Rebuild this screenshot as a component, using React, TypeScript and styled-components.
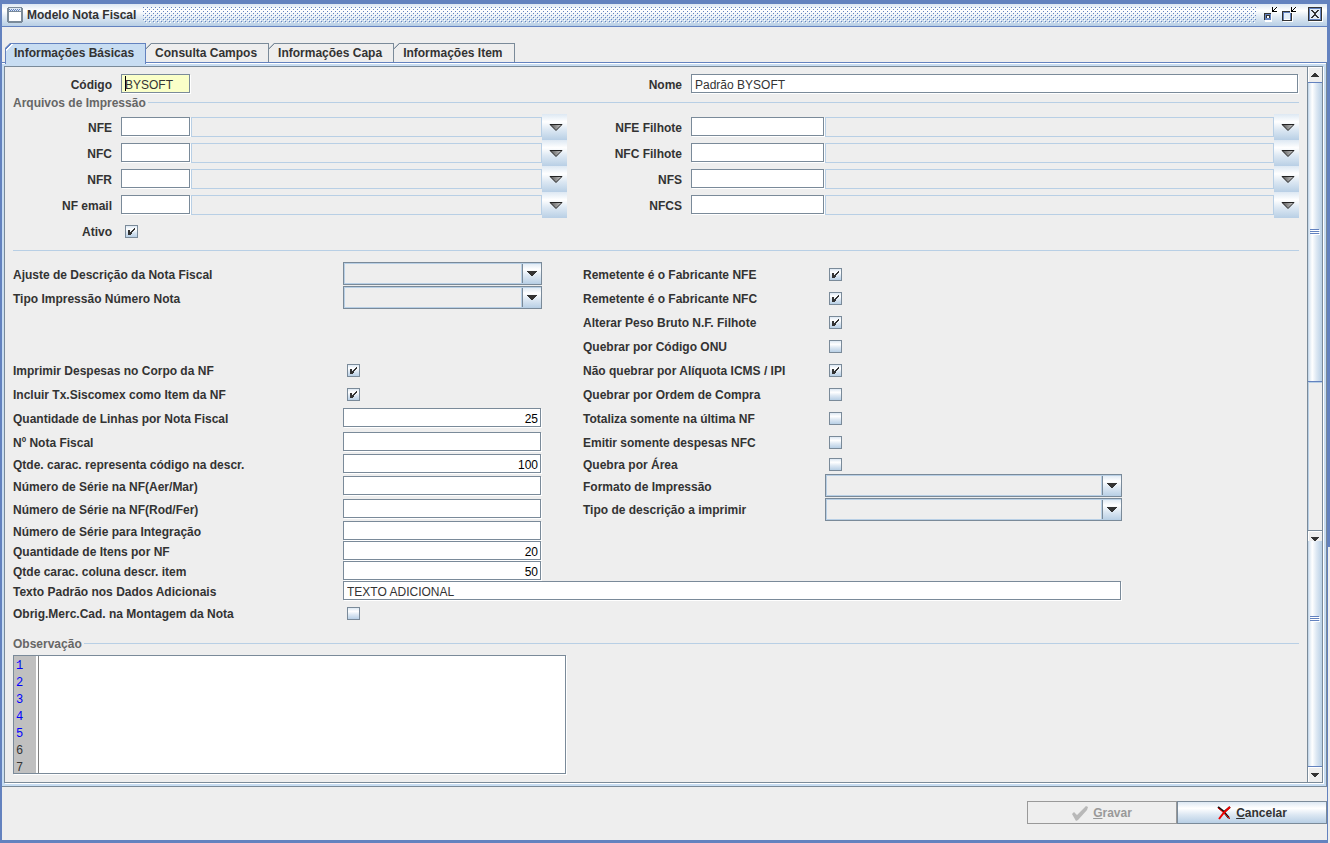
import React, { useState } from 'react';
import styled, { createGlobalStyle, css } from 'styled-components';

const c = {
  frame: '#6382bf',
  steel: '#7a8a99',
  sky: '#c8ddf2',
  pale: '#b8cfe5',
  ground: '#eeeeee',
  ink: '#333333',
};

const sheen = 'linear-gradient(180deg, #dde8f3 0%, #ffffff 30%, #dde8f3 60%, #b8cfe5 100%)';

const GlobalStyle = createGlobalStyle`
  * { box-sizing: border-box; }
  body { margin: 0; background: ${c.ground}; }
  body, button, input, select, textarea {
    font-family: "Liberation Sans", Arial, sans-serif;
    font-size: 12px;
    color: ${c.ink};
  }
`;

const Frame = styled.div`
  position: relative;
  min-height: 100vh;
  display: flex;
  flex-direction: column;
  background: ${c.ground};
  border: solid ${c.frame};
  border-width: 4px 3px 3px 2px;

  /* The lower part of the right edge is thinner than the upper part. */
  &::after {
    content: '';
    position: absolute;
    top: 65%;
    right: -3px;
    bottom: -3px;
    width: 2px;
    background: ${c.ground};
  }
`;

const TitleBar = styled.header`
  height: 23px;
  flex: none;
  display: flex;
  align-items: center;
  padding: 0 4px 0 5px;
  border-bottom: 1px solid ${c.frame};
  background: ${sheen};
`;

const Title = styled.h1`
  margin: 0 7px 0 4px;
  font-size: 12px;
  line-height: 16px;
  font-weight: bold;
`;

const DragTexture = styled.div`
  flex: 1;
  height: 16px;
  background: url("data:image/svg+xml,%3Csvg xmlns='http://www.w3.org/2000/svg' width='4' height='4' shape-rendering='crispEdges'%3E%3Cpath fill='%236382bf' d='M0 0h1v1h-1zM2 2h1v1h-1z'/%3E%3Cpath fill='%23fff' d='M1 1h1v1h-1zM3 3h1v1h-1z'/%3E%3C/svg%3E") 0 0 / 4px 4px;
`;

const TitleActions = styled.div`
  display: flex;
  align-items: center;
  gap: 2px;
  margin-left: 7px;
`;

const IconButton = styled.button<{ $spaced?: boolean }>`
  display: flex;
  width: 16px;
  height: 16px;
  padding: 0;
  border: 0;
  background: none;
  margin-left: ${(p) => (p.$spaced ? '8px' : '0')};
`;

const TabList = styled.div`
  display: flex;
  flex: none;
  align-items: flex-start;
  padding: 16px 0 0 3px;
  height: 35px;
`;

const Tab = styled.button<{ $active?: boolean }>`
  height: 19px;
  padding: 0 11px 0 9px;
  border: solid ${(p) => (p.$active ? c.frame : c.steel)};
  border-width: 1px 1px 0 0;
  clip-path: polygon(5px 0, calc(100% + 1px) 0, calc(100% + 1px) 100%, 0 100%, 0 5px);
  background: linear-gradient(135deg, ${c.steel} 4px, ${c.ground} 4px);
  font-weight: bold;
  line-height: 17px;
  white-space: nowrap;

  ${(p) =>
    p.$active &&
    css`
      position: relative;
      z-index: 1;
      height: 21px;
      padding: 0 11px 2px 8px;
      border-left-width: 1px;
      background: linear-gradient(135deg, ${c.frame} 4px, #fff 4px, #fff 5px, ${c.sky} 5px);
    `}
`;

const TabPanel = styled.section`
  flex: 1;
  display: flex;
  border: solid ${c.steel};
  border-width: 1px 1px 1px 0;
  border-top-color: ${c.frame};
  background: ${c.sky};
  padding: 3px 3px 3px 2px;
  box-shadow: inset 0 1px 0 #fff;
`;

const ScrollArea = styled.div`
  flex: 1;
  min-width: 0;
  display: flex;
  border: 1px solid ${c.steel};
  background: ${c.ground};
  box-shadow: 1px 1px 0 #fff;
`;

const Form = styled.form`
  flex: 1;
  min-width: 0;
  padding: 6px 8px 8px;
`;

const Halves = styled.div`
  display: grid;
  grid-template-columns: 554fr 732fr;
`;

const LookupRow = styled.div<{ $side: 'left' | 'right' }>`
  display: grid;
  grid-template-columns: ${(p) =>
    p.$side === 'left' ? '108px 70px 1fr 25px' : '124px 134px 1fr 25px'};
  align-items: center;
  height: 26px;
`;

const HeadRow = styled(LookupRow)`
  height: 22px;
`;

const Label = styled.label`
  padding-top: 2px;
  font-weight: bold;
  line-height: 14px;
  white-space: nowrap;
`;

const RightLabel = styled(Label)`
  padding-right: 9px;
  text-align: right;
`;

const SideLabel = styled(Label)`
  padding-left: 41px;
`;

const field = css`
  height: 19px;
  padding: 2px 3px 0;
  border: 1px solid ${c.steel};
  border-radius: 0;
  outline: none;
  background: #fff;
  box-shadow: 1px 1px 0 #fff;
`;

const TextField = styled.input<{ $highlight?: boolean; $numeric?: boolean }>`
  ${field}
  width: calc(100% - 1px);
  min-width: 0;
  margin: 0 1px 1px 0;
  ${(p) =>
    p.$highlight &&
    `background: linear-gradient(#000, #000) 3px 1px / 1px 15px no-repeat, #faffc8;`}
  ${(p) => p.$numeric && 'text-align: right; color: #000; padding-right: 2px;'}
`;

const NameField = styled(TextField)`
  grid-column: 2 / 5;
`;

const Description = styled.input`
  width: 100%;
  min-width: 0;
  height: 20px;
  padding: 0 3px;
  border: 1px solid ${c.pale};
  border-radius: 0;
  background: ${c.ground};
`;

const LookupButton = styled.button`
  height: 26px;
  display: flex;
  align-items: center;
  justify-content: center;
  padding: 2px 0 0 2px;
  border: 0;
  background: ${sheen};
`;

const Legend = styled.div`
  display: flex;
  align-items: center;
  height: 14px;
  gap: 2px;
  font-weight: bold;
  color: #666;
  white-space: nowrap;

  &::after {
    content: '';
    flex: 1;
    height: 1px;
    background: ${c.pale};
  }
`;

const NotesLegend = styled(Legend)`
  margin-top: 11px;
`;

const LegendText = styled.span`
  padding-top: 2px;
  line-height: 14px;
`;

const LookupRows = styled.div`
  padding-top: 5px;
`;

const Divider = styled.hr`
  height: 1px;
  margin: 6px 0 11px;
  border: 0;
  background: ${c.pale};
`;

const Tick = styled.input.attrs({ type: 'checkbox' })`
  appearance: none;
  width: 13px;
  height: 13px;
  margin: 0 0 0 4px;
  border: 1px solid ${c.steel};
  background: ${sheen};

  &:checked {
    background:
      url("data:image/svg+xml,%3Csvg xmlns='http://www.w3.org/2000/svg' width='11' height='11' shape-rendering='crispEdges'%3E%3Cpath fill='%23333' d='M2 4h2v5h-2zM4 6h1v3h-1zM5 5h1v3h-1zM6 4h1v2h-1zM7 3h1v2h-1zM8 2h1v2h-1z'/%3E%3C/svg%3E") 0 0 / 11px 11px no-repeat,
      ${sheen};
  }
`;

const Options = styled.div`
  display: grid;
  grid-template-columns: 330px 199px 283px 297px;
  grid-template-rows: repeat(8, 24px) 20px 24px 22px 21px 20px 20px 20px 24px;
`;

const Cell = styled.div<{ $row: number; $col: string; $top?: boolean }>`
  grid-row: ${(p) => p.$row};
  grid-column: ${(p) => p.$col};
  display: flex;
  align-items: ${(p) => (p.$top ? 'flex-start' : 'center')};
`;

const Combo = styled.select`
  appearance: none;
  width: 100%;
  height: 23px;
  padding: 0 22px 0 4px;
  border: 1px solid ${c.steel};
  border-radius: 0;
  outline: none;
  background:
    url("data:image/svg+xml,%3Csvg xmlns='http://www.w3.org/2000/svg' width='10' height='5' shape-rendering='crispEdges'%3E%3Cpath fill='%23333' d='M0 0h10v1h-1v1h-1v1h-1v1h-1v1h-2v-1h-1v-1h-1v-1h-1v-1h-1z'/%3E%3C/svg%3E") no-repeat right 4px center,
    linear-gradient(${c.steel}, ${c.steel}) no-repeat right 18px center / 1px 100%,
    ${sheen} no-repeat right center / 18px 100%,
    linear-gradient(${c.pale}, ${c.pale}) no-repeat right 19px center / 1px 100%,
    ${c.ground};
  box-shadow: inset 1px 1px 0 ${c.pale}, inset 0 -1px 0 ${c.pale};
`;

const Notes = styled.div`
  display: flex;
  width: 553px;
  max-width: 100%;
  height: 119px;
  margin-top: 5px;
  border: 1px solid ${c.steel};
  background: #fff;
  box-shadow: 1px 1px 0 #fff;
  overflow: hidden;
`;

const Gutter = styled.ol`
  width: 22px;
  margin: 0 2px 0 0;
  padding: 2px 2px 0;
  list-style: none;
  background: #c0c0c0;
  font-family: "Liberation Mono", monospace;
  font-size: 12px;
  line-height: 17px;
`;

const LineNumber = styled.li<{ $blue: boolean }>`
  color: ${(p) => (p.$blue ? '#0000ff' : c.ink)};
`;

const NotesText = styled.textarea`
  flex: 1;
  padding: 1px 3px;
  border: 0;
  border-left: 1px solid #808080;
  outline: none;
  resize: none;
  line-height: 17px;
`;

const ScrollBar = styled.div`
  width: 15px;
  display: flex;
  flex-direction: column;
  border-left: 1px solid ${c.steel};
`;

const ScrollButton = styled.button<{ $part?: boolean }>`
  flex: none;
  display: flex;
  justify-content: center;
  align-items: ${(p) => (p.$part ? 'flex-end' : 'center')};
  height: ${(p) => (p.$part ? '11px' : '15px')};
  padding: 0;
  border: 0;
  border-top: ${(p) => (p.$part ? `1px solid ${c.steel}` : '0')};
  background: ${c.ground};
  box-shadow: inset 1px 1px 0 #fff;
`;

const Thumb = styled.div<{ $grow: number; $continued?: boolean }>`
  flex: ${(p) => p.$grow} 1 0;
  display: flex;
  align-items: ${(p) => (p.$continued ? 'flex-start' : 'center')};
  justify-content: center;
  border: solid ${c.frame};
  border-width: ${(p) => (p.$continued ? '0 0 1px' : '1px 0')};
  background: linear-gradient(90deg, #b8cfe5 0, #dde8f3 10%, #fff 30%, #dde8f3 60%, #b8cfe5 100%);

  & > svg { margin-top: ${(p) => (p.$continued ? '75px' : '0')}; }
`;

const Track = styled.div`
  flex: 148 1 0;
  border-left: 1px solid ${c.pale};
  box-shadow: inset 0 1px 0 ${c.pale};
`;

const Footer = styled.footer`
  flex: none;
  display: flex;
  justify-content: flex-end;
  padding: 14px 0 16px;
`;

const ActionButton = styled.button`
  display: flex;
  align-items: center;
  justify-content: center;
  gap: 4px;
  width: 150px;
  height: 23px;
  padding: 0;
  border: 1px solid ${c.steel};
  background: ${sheen};
  font-weight: bold;

  &:disabled {
    border-color: #999;
    background: ${c.ground};
    color: #999;
  }
`;

const WindowIcon = () => (
  <svg width="16" height="16" shapeRendering="crispEdges" aria-hidden="true">
    <path fill={c.steel} d="M1 0h14v1h1v14h-1v1h-14v-1h-1v-14h1z" />
    <path fill="#dde8f3" d="M2 1h12v3h-12z" />
    <path fill={c.frame} d="M2 2h1v1h-1zM4 2h1v1h-1zM6 2h1v1h-1zM8 2h1v1h-1zM10 2h1v1h-1zM12 2h1v1h-1zM3 3h1v1h-1zM5 3h1v1h-1zM7 3h1v1h-1zM9 3h1v1h-1zM11 3h1v1h-1z" />
    <path fill="#fff" d="M2 5h12v9h-12z" />
  </svg>
);

const CornerArrow = () => (
  <>
    <path fill="#fff" d="M10 5h5v1h-5zM11 3h1v1h-1zM12 2h1v1h-1zM13 1h1v1h-1zM14 0h1v1h-1z" />
    <path fill="#000" d="M9 0h1v5h-1zM10 4h4v1h-4zM10 3h1v1h-1zM11 2h1v1h-1zM12 1h1v1h-1zM13 0h1v1h-1z" />
  </>
);

const MinimizeIcon = () => (
  <svg width="16" height="16" shapeRendering="crispEdges" overflow="visible" aria-hidden="true">
    <path fill="#fff" d="M2 7h7v8h-7z" />
    <path fill={c.ink} d="M1 6h7v7h-7z" />
    <path fill={c.frame} d="M2 7h6v6h-6z" />
    <path fill={c.ink} d="M3 8h4v3h-4z" />
    <path fill="#fff" d="M4 9h2v2h-2z" />
    <CornerArrow />
  </svg>
);

const MaximizeIcon = () => (
  <svg width="16" height="16" shapeRendering="crispEdges" overflow="visible" aria-hidden="true">
    <path fill="#fff" d="M2 6h10v9h-10z" />
    <path fill={c.ink} d="M1 4h8v1h-7v8h8v-7h1v8h-10z" />
    <path fill={c.frame} d="M2 5h7v1h-6v7h6v-7h1v7h-8z" />
    <path fill="#e4edf6" d="M3 6h6v6h-6z" />
    <g transform="translate(1)"><CornerArrow /></g>
  </svg>
);

const CloseIcon = () => (
  <svg width="16" height="16" shapeRendering="crispEdges" aria-hidden="true">
    <g transform="translate(1)">
      <path fill="#fff" d="M1 1h14v14h-14z" />
      <path fill={c.ink} d="M0 0h14v14h-14z" />
      <path fill={c.frame} d="M1 1h12v12h-12z" />
      <path fill="#e4edf6" d="M2 2h10v10h-10z" />
      <path
        fill={c.ink}
        d="M3 3h2v1h-2zM4 4h2v1h-2zM5 5h2v1h-2zM6 6h2v2h-2zM7 5h2v1h-2zM8 4h2v1h-2zM9 3h2v1h-2zM5 8h2v1h-2zM4 9h2v1h-2zM3 10h2v1h-2zM7 8h2v1h-2zM8 9h2v1h-2zM9 10h2v1h-2z"
      />
    </g>
  </svg>
);

const LookupArrow = () => (
  <svg width="14" height="8" aria-hidden="true">
    <defs>
      <linearGradient id="arrow" x1="0" x2="1">
        <stop offset="0" stopColor="#555" />
        <stop offset="1" stopColor="#ccc" />
      </linearGradient>
    </defs>
    <path d="M1 .5h12l-6 6z" fill="url(#arrow)" stroke="#222" strokeWidth="1" />
  </svg>
);

const Arrow = ({ up }: { up?: boolean }) => (
  <svg width="8" height="4" shapeRendering="crispEdges" aria-hidden="true">
    <path fill={c.ink} d={up ? 'M3 0h2v1h1v1h1v1h1v1h-8v-1h1v-1h1v-1h1z' : 'M0 0h8v1h-1v1h-1v1h-1v1h-2v-1h-1v-1h-1v-1h-1z'} />
  </svg>
);

const Grip = () => (
  <svg width="10" height="6" shapeRendering="crispEdges" aria-hidden="true">
    <path fill="#fff" d="M1 1h9v1h-9zM1 3h9v1h-9zM1 5h9v1h-9z" />
    <path fill={c.frame} d="M0 0h9v1h-9zM0 2h9v1h-9zM0 4h9v1h-9z" />
  </svg>
);

const CheckMark = () => (
  <svg width="17" height="16" aria-hidden="true">
    <path d="M0 9l2-2 3 3 9-9 2 1-1 3-9 10-2 1z" fill="#b8b8b8" />
  </svg>
);

const Cross = () => (
  <svg width="15" height="14" aria-hidden="true">
    <path d="M1 1l5 4 6 7" stroke="#111" strokeWidth="2" fill="none" />
    <path d="M13 1l-6 5" stroke="#111" strokeWidth="2" fill="none" />
    <path d="M13 1l-6 5.500-5 6.500" stroke="#e00" strokeWidth="2" fill="none" />
    <path d="M1 2l5 4 7 7" stroke="#e00" strokeWidth="1" fill="none" />
  </svg>
);

const tabs = ['Informações Básicas', 'Consulta Campos', 'Informações Capa', 'Informações Item'];

const lookups: [string, string][] = [
  ['NFE', 'NFE Filhote'],
  ['NFC', 'NFC Filhote'],
  ['NFR', 'NFS'],
  ['NF email', 'NFCS'],
];

type Kind = 'combo' | 'check' | 'text' | 'number' | 'wide';
type Option = { row: number; label: string; kind: Kind; value?: string; on?: boolean };

const leftOptions: Option[] = [
  { row: 1, label: 'Ajuste de Descrição da Nota Fiscal', kind: 'combo' },
  { row: 2, label: 'Tipo Impressão Número Nota', kind: 'combo' },
  { row: 5, label: 'Imprimir Despesas no Corpo da NF', kind: 'check', on: true },
  { row: 6, label: 'Incluir Tx.Siscomex como Item da NF', kind: 'check', on: true },
  { row: 7, label: 'Quantidade de Linhas por Nota Fiscal', kind: 'number', value: '25' },
  { row: 8, label: 'Nº Nota Fiscal', kind: 'text' },
  { row: 9, label: 'Qtde. carac. representa código na descr.', kind: 'number', value: '100' },
  { row: 10, label: 'Número de Série na NF(Aer/Mar)', kind: 'text' },
  { row: 11, label: 'Número de Série na NF(Rod/Fer)', kind: 'text' },
  { row: 12, label: 'Número de Série para Integração', kind: 'text' },
  { row: 13, label: 'Quantidade de Itens por NF', kind: 'number', value: '20' },
  { row: 14, label: 'Qtde carac. coluna descr. item', kind: 'number', value: '50' },
  { row: 15, label: 'Texto Padrão nos Dados Adicionais', kind: 'wide', value: 'TEXTO ADICIONAL' },
  { row: 16, label: 'Obrig.Merc.Cad. na Montagem da Nota', kind: 'check' },
];

const rightOptions: Option[] = [
  { row: 1, label: 'Remetente é o Fabricante NFE', kind: 'check', on: true },
  { row: 2, label: 'Remetente é o Fabricante NFC', kind: 'check', on: true },
  { row: 3, label: 'Alterar Peso Bruto N.F. Filhote', kind: 'check', on: true },
  { row: 4, label: 'Quebrar por Código ONU', kind: 'check' },
  { row: 5, label: 'Não quebrar por Alíquota ICMS / IPI', kind: 'check', on: true },
  { row: 6, label: 'Quebrar por Ordem de Compra', kind: 'check' },
  { row: 7, label: 'Totaliza somente na última NF', kind: 'check' },
  { row: 8, label: 'Emitir somente despesas NFC', kind: 'check' },
  { row: 9, label: 'Quebra por Área', kind: 'check' },
  { row: 10, label: 'Formato de Impressão', kind: 'combo' },
  { row: 11, label: 'Tipo de descrição a imprimir', kind: 'combo' },
];

const OptionRow = ({ option, side }: { option: Option; side: 'left' | 'right' }) => {
  const id = `${side}-${option.row}`;
  const { kind, row } = option;
  const start = side === 'left' ? 1 : 3;
  const Caption = side === 'left' ? Label : SideLabel;
  return (
    <>
      <Cell $row={row} $col={`${start}`}>
        <Caption htmlFor={id}>{option.label}</Caption>
      </Cell>
      <Cell $row={row} $col={kind === 'wide' ? '2 / 5' : `${start + 1}`} $top={kind === 'combo'}>
        {kind === 'combo' && <Combo id={id}><option value="" /></Combo>}
        {kind === 'check' && <Tick id={id} defaultChecked={option.on} />}
        {(kind === 'text' || kind === 'number' || kind === 'wide') && (
          <TextField id={id} $numeric={kind === 'number'} defaultValue={option.value} />
        )}
      </Cell>
    </>
  );
};

const LookupField = ({ name, side }: { name: string; side: 'left' | 'right' }) => {
  const id = `lookup-${name.replace(' ', '-')}`;
  return (
    <LookupRow $side={side}>
      <RightLabel htmlFor={id}>{name}</RightLabel>
      <TextField id={id} />
      <Description readOnly aria-label={`Descrição ${name}`} />
      <LookupButton type="button" aria-label={`Pesquisar ${name}`}><LookupArrow /></LookupButton>
    </LookupRow>
  );
};

export default function App() {
  const [active, setActive] = useState(0);
  return (
    <Frame>
      <GlobalStyle />
      <TitleBar>
        <WindowIcon />
        <Title>Modelo Nota Fiscal</Title>
        <DragTexture />
        <TitleActions>
          <IconButton type="button" aria-label="Minimizar"><MinimizeIcon /></IconButton>
          <IconButton type="button" aria-label="Maximizar"><MaximizeIcon /></IconButton>
          <IconButton type="button" $spaced aria-label="Fechar"><CloseIcon /></IconButton>
        </TitleActions>
      </TitleBar>
      <TabList role="tablist">
        {tabs.map((name, i) => (
          <Tab key={name} type="button" role="tab" aria-selected={i === active} $active={i === active} onClick={() => setActive(i)}>
            {name}
          </Tab>
        ))}
      </TabList>
      <TabPanel role="tabpanel">
        <ScrollArea>
          <Form>
            <Halves>
              <HeadRow $side="left">
                <RightLabel htmlFor="codigo">Código</RightLabel>
                <TextField id="codigo" $highlight defaultValue="BYSOFT" />
              </HeadRow>
              <HeadRow $side="right">
                <RightLabel htmlFor="nome">Nome</RightLabel>
                <NameField id="nome" defaultValue="Padrão BYSOFT" />
              </HeadRow>
            </Halves>
            <Legend><LegendText>Arquivos de Impressão</LegendText></Legend>
            <LookupRows>
              {lookups.map(([left, right]) => (
                <Halves key={left}>
                  <LookupField name={left} side="left" />
                  <LookupField name={right} side="right" />
                </Halves>
              ))}
              <LookupRow $side="left">
                <RightLabel htmlFor="ativo">Ativo</RightLabel>
                <Tick id="ativo" defaultChecked />
              </LookupRow>
            </LookupRows>
            <Divider />
            <Options>
              {leftOptions.map((o) => <OptionRow key={o.label} option={o} side="left" />)}
              {rightOptions.map((o) => <OptionRow key={o.label} option={o} side="right" />)}
            </Options>
            <NotesLegend><LegendText>Observação</LegendText></NotesLegend>
            <Notes>
              <Gutter aria-hidden="true">
                {[1, 2, 3, 4, 5, 6, 7].map((n) => <LineNumber key={n} $blue={n < 6}>{n}</LineNumber>)}
              </Gutter>
              <NotesText aria-label="Observação" />
            </Notes>
          </Form>
          <ScrollBar>
            <ScrollButton type="button" aria-label="Rolar para cima"><Arrow up /></ScrollButton>
            <Thumb $grow={299}><Grip /></Thumb>
            <Track />
            <ScrollButton type="button" $part aria-label="Rolar"><Arrow /></ScrollButton>
            <Thumb $grow={226} $continued><Grip /></Thumb>
            <ScrollButton type="button" aria-label="Rolar para baixo"><Arrow /></ScrollButton>
          </ScrollBar>
        </ScrollArea>
      </TabPanel>
      <Footer>
        <ActionButton type="button" disabled><CheckMark /><span><u>G</u>ravar</span></ActionButton>
        <ActionButton type="button"><Cross /><span><u>C</u>ancelar</span></ActionButton>
      </Footer>
    </Frame>
  );
}
